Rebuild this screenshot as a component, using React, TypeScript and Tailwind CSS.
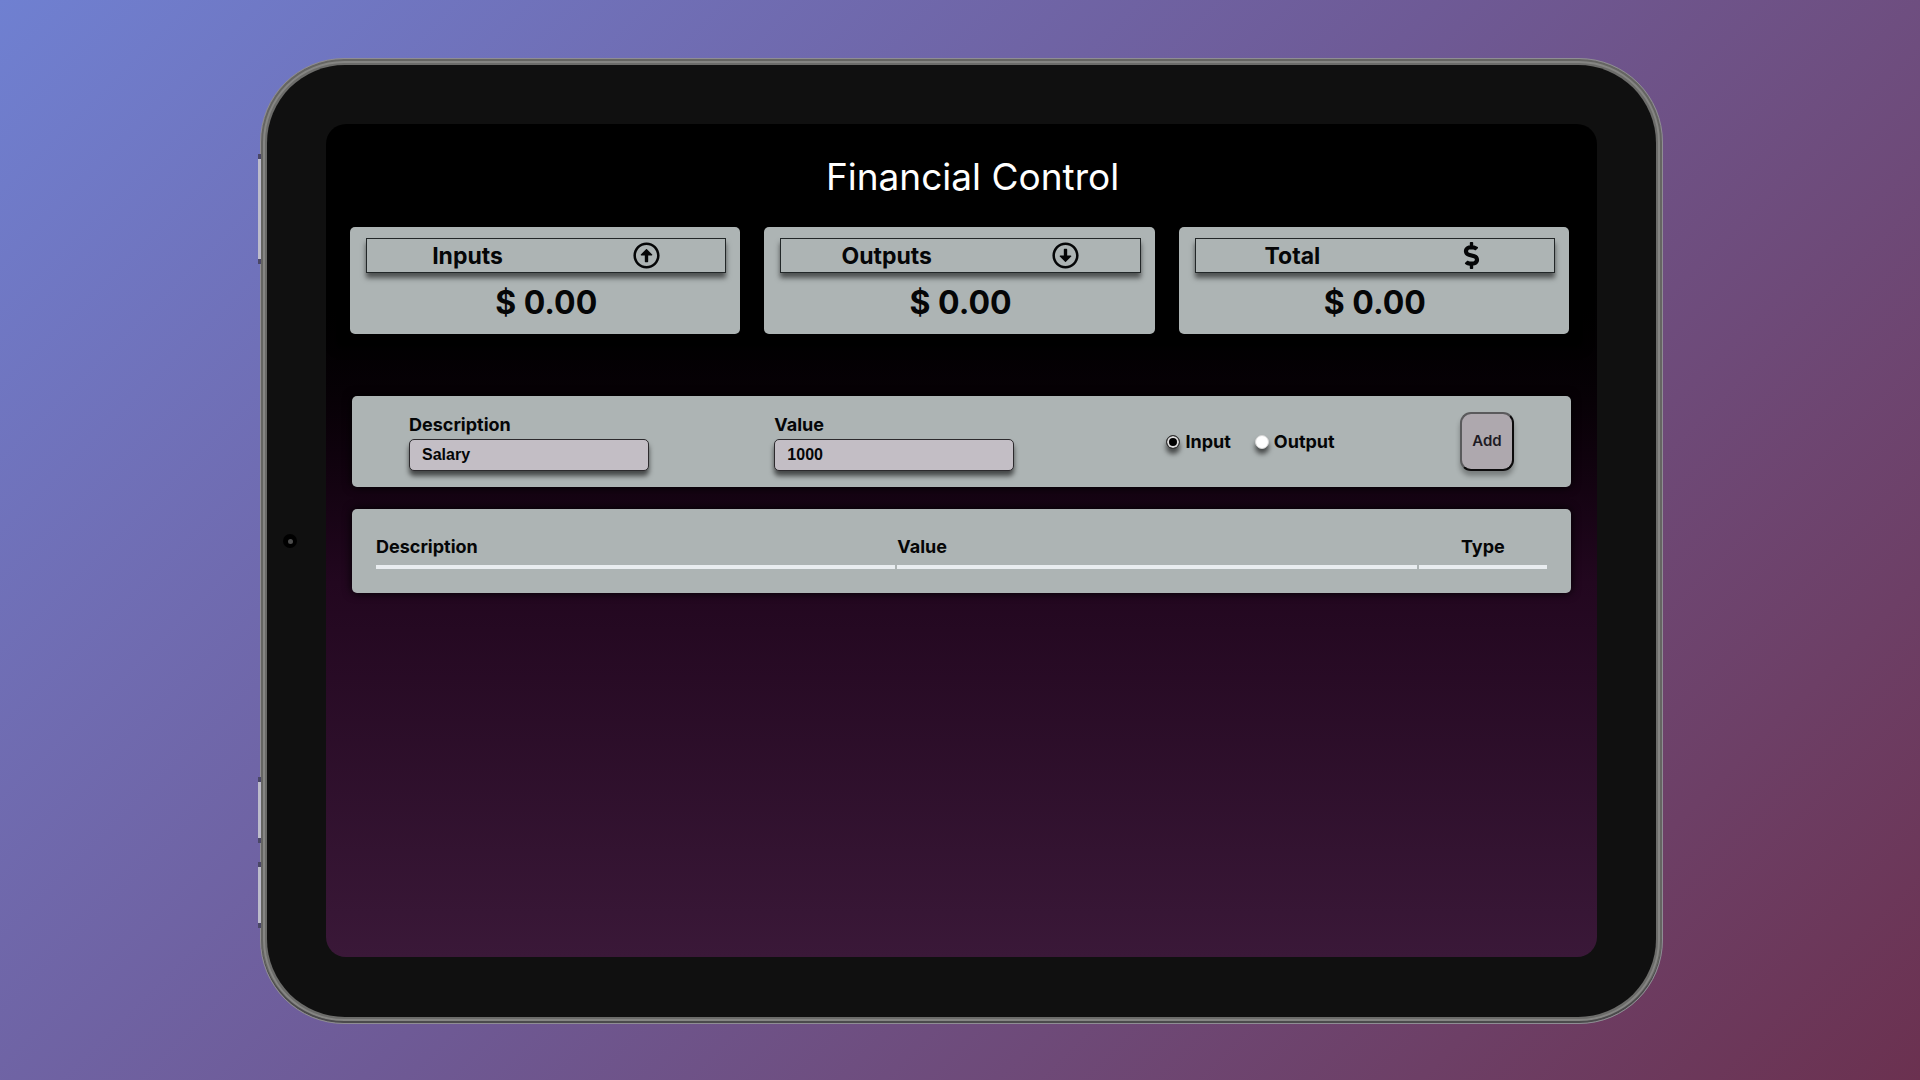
import { useState } from "react";
import type { ReactNode } from "react";
import { FaRegArrowAltCircleUp, FaRegArrowAltCircleDown, FaDollarSign } from "react-icons/fa";

type SummaryProps = { title: string; value: string; icon: ReactNode };

function SummaryCard({ title, value, icon }: SummaryProps) {
  return (
    <section className="flex min-w-0 flex-1 flex-col rounded-[5px] bg-[#adb4b4] pt-[11px] pr-3.5 pb-[11px] pl-4">
      <header className="flex h-[35px] items-center justify-around border border-[#222728] shadow-[0_5px_5px_rgba(0,0,0,0.55)]">
        <h2 className="text-[23px] leading-7 font-bold">{title}</h2>
        {icon}
      </header>
      <p className="mt-[10px] text-center text-[32px] leading-10 font-bold">{value}</p>
    </section>
  );
}

function Field({ id, label, value, onChange }: { id: string; label: string; value: string; onChange: (v: string) => void }) {
  return (
    <div className="flex flex-col">
      <label htmlFor={id} className="text-[18px] leading-6 font-bold">
        {label}
      </label>
      <input
        id={id}
        value={value}
        onChange={(e) => onChange(e.target.value)}
        className="mt-0.5 h-8 w-60 rounded-[5px] border border-[#2c2a2d] bg-[#c3bec5] px-3 font-['Liberation_Sans',sans-serif] text-base font-bold shadow-[0_5px_5px_rgba(0,0,0,0.6)] outline-none"
      />
    </div>
  );
}

function TypeRadio({ id, label, checked, onSelect }: { id: string; label: string; checked: boolean; onSelect: () => void }) {
  return (
    <div className="flex items-center gap-[5px]">
      <input
        type="radio"
        id={id}
        name="kind"
        checked={checked}
        onChange={onSelect}
        className="size-3.5 appearance-none rounded-full border border-[#d4d4d4] bg-white shadow-[0_5px_5px_rgba(0,0,0,0.6)] checked:border-[#333333] checked:bg-black checked:shadow-[inset_0_0_0_2px_#dcdcdc,0_5px_5px_rgba(0,0,0,0.6)]"
      />
      <label htmlFor={id} className="text-[18px] leading-6 font-bold">
        {label}
      </label>
    </div>
  );
}

function SideButton({ className }: { className: string }) {
  return <div className={`absolute -left-[3px] w-[3px] border-y-[5px] border-[#4a4766] bg-[#bdbccb] ${className}`} />;
}

export default function App() {
  const [description, setDescription] = useState("Salary");
  const [amount, setAmount] = useState("1000");
  const [kind, setKind] = useState("input");

  return (
    <div className="flex min-h-screen bg-linear-135 from-[#6f80d1] via-[#6e5a96] via-48% to-[#6b3150] pt-[58px] pr-[257px] pb-14 pl-[260px] font-[Inter,sans-serif] text-[#050607]">
      <div className="relative flex flex-1 rounded-[84px] border border-[#8f8d94] bg-[#6c6c6a] p-[6px] shadow-[inset_0_-2px_0_#4b4a4c,inset_0_0_0_2px_#656562,inset_0_0_0_4px_#858583]">
        <SideButton className="top-[95px] h-[110px]" />
        <SideButton className="top-[718px] h-[66px]" />
        <SideButton className="top-[803px] h-[66px]" />

        <div className="relative flex flex-1 rounded-[78px] bg-[#101010] pt-[59px] pr-[59px] pb-[60px] pl-[59px]">
          <div className="absolute top-1/2 left-4 flex size-3.5 -translate-y-1/2 items-center justify-center rounded-full bg-black">
            <div className="size-[5px] rounded-sm bg-[#4d4d4d]" />
          </div>

          <main className="flex-1 overflow-hidden rounded-[20px] bg-linear-to-b from-black from-10% via-[#22071f] via-55% to-[#3a1838]">
            <div className="px-6 pt-[31px]">
              <h1 className="pl-[22px] text-center text-[37px] leading-[44px] text-white">Financial Control</h1>
              <div className="mt-7 mr-1 flex gap-6 bg-black shadow-[0_0_8px_14px_#000]">
                <SummaryCard title="Inputs" value="$ 0.00" icon={<FaRegArrowAltCircleUp className="size-[27px]" />} />
                <SummaryCard title="Outputs" value="$ 0.00" icon={<FaRegArrowAltCircleDown className="size-[27px]" />} />
                <SummaryCard title="Total" value="$ 0.00" icon={<FaDollarSign className="size-[27px]" />} />
              </div>
            </div>

            <div className="mt-[62px] flex flex-col gap-[22px] px-[26px]">
              <form
                onSubmit={(e) => e.preventDefault()}
                className="flex h-[91px] items-center justify-between rounded-[5px] bg-[#adb4b4] px-[57px] shadow-[0_0_10px_#000]"
              >
                <Field id="description" label="Description" value={description} onChange={setDescription} />
                <Field id="amount" label="Value" value={amount} onChange={setAmount} />
                <div className="flex w-[195px] justify-end gap-6">
                  <TypeRadio id="input" label="Input" checked={kind === "input"} onSelect={() => setKind("input")} />
                  <TypeRadio id="output" label="Output" checked={kind === "output"} onSelect={() => setKind("output")} />
                </div>
                <button
                  type="submit"
                  className="h-[59px] w-[54px] rounded-[11px] border-2 border-t-[#5a5a5c] border-r-[#0c0b0c] border-b-[#0c0b0c] border-l-[#5a5a5c] bg-[#aea8ae] text-[15px] font-semibold text-[#1d1b24] shadow-[0_5px_5px_rgba(0,0,0,0.3)]"
                >
                  Add
                </button>
              </form>

              <div className="rounded-[5px] bg-[#adb4b4] px-[22px] pt-[22px] pb-6 shadow-[0_0_10px_#000]">
                <table className="w-full table-fixed border-separate border-spacing-x-0.5 border-spacing-y-0 text-[18px] leading-6">
                  <colgroup>
                    <col />
                    <col />
                    <col className="w-[11%]" />
                  </colgroup>
                  <thead>
                    <tr>
                      <th className="border-b-4 border-[#e9edf0] pt-1 pb-1.5 text-left font-bold">Description</th>
                      <th className="border-b-4 border-[#e9edf0] pt-1 pb-1.5 text-left font-bold">Value</th>
                      <th className="border-b-4 border-[#e9edf0] pt-1 pb-1.5 text-center font-bold">Type</th>
                    </tr>
                  </thead>
                </table>
              </div>
            </div>
          </main>
        </div>
      </div>
    </div>
  );
}
